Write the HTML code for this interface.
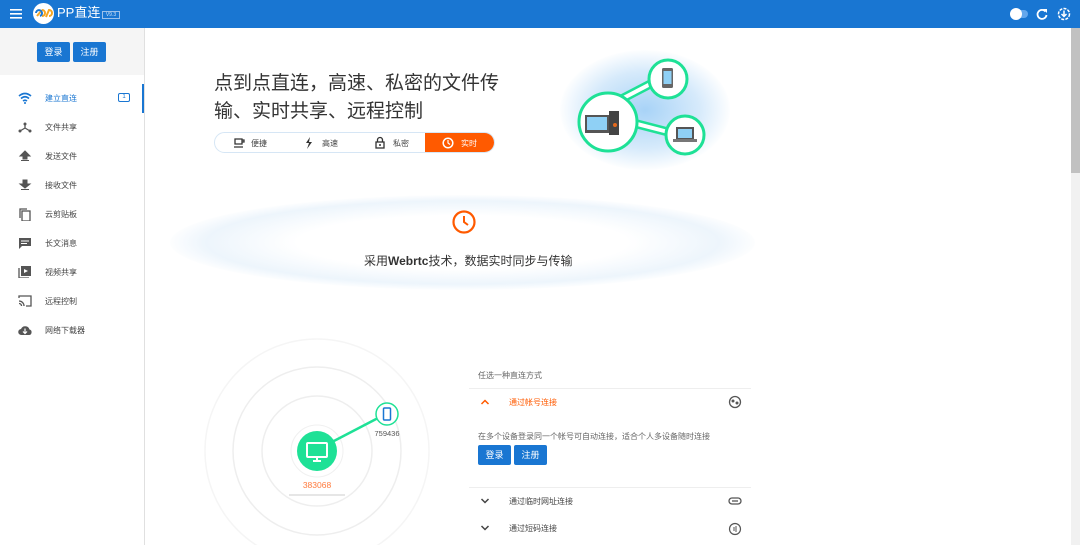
<!DOCTYPE html><html><head><meta charset="utf-8"><style>
*{margin:0;padding:0;box-sizing:border-box}
body{width:1080px;height:545px;overflow:hidden;background:#fff;font-family:"Liberation Sans","Noto Sans CJK SC",sans-serif;position:relative;color:#333}
.hdr{position:absolute;left:0;top:0;width:1080px;height:28px;background:#1976d2}
.side{position:absolute;left:0;top:28px;width:145px;height:517px;border-right:1px solid #e0e0e0;background:#fff}
.stop{height:47px;background:#f5f5f5;position:relative}
.btn{position:absolute;background:#1976d2;color:#fff;font-size:9px;border-radius:2px;text-align:center;line-height:20px;height:20px;width:33px}
.mi{position:absolute;left:0;height:29px;width:145px;font-size:8px;color:#444}
.mi span{position:absolute;left:45px;top:9px}
.mi svg{position:absolute;left:18px;top:8px}
.abs{position:absolute}
</style></head><body>
<div class="hdr">
<svg class="abs" style="left:10px;top:9px" width="12" height="10"><rect y="0" width="12" height="1.6" fill="#fff"/><rect y="4" width="12" height="1.6" fill="#fff"/><rect y="8" width="12" height="1.6" fill="#fff"/></svg>
<div class="abs" style="left:33px;top:3px;width:21px;height:21px;border-radius:50%;background:#fff"></div>
<svg class="abs" style="left:34px;top:7px" width="20" height="13"><path d="M3 9 L8 3 M8 3 A3 3 0 1 1 8 9 M12 10 L15 3 A3 3 0 1 1 15 9" stroke="#f5a623" stroke-width="2" fill="none"/><path d="M2 6 A3 3 0 1 1 6 9" stroke="#1976d2" stroke-width="2" fill="none"/></svg>
<div class="abs" style="left:57px;top:5px;color:#fff;font-size:13px;line-height:16px">PP直连</div>
<div class="abs" style="left:102px;top:11px;width:18px;height:8px;border:1px solid #9cc1ea;color:#cfe1f5;font-size:5px;line-height:6px;text-align:center">V9.3</div>
<div class="abs" style="left:1010px;top:10px;width:18px;height:8px;border-radius:4px;background:#64a7ec"></div>
<div class="abs" style="left:1010px;top:8px;width:12px;height:12px;border-radius:50%;background:#fff"></div>
<svg class="abs" style="left:1036px;top:8px" width="12" height="12"><path d="M9.5 3.5 A4.5 4.5 0 1 0 10.5 7" stroke="#fff" stroke-width="1.8" fill="none"/><path d="M7 1 L11 1 L11 5Z" fill="#fff"/></svg>
<svg class="abs" style="left:1057px;top:7px" width="14" height="14"><circle cx="7" cy="7" r="5.5" stroke="#fff" stroke-width="1.5" fill="none" stroke-dasharray="3 1.2"/><path d="M7 3.5 V9 M4.5 7 L7 9.5 L9.5 7" stroke="#fff" stroke-width="1.5" fill="none"/></svg>
</div>
<div class="side">
<div class="stop"><div class="btn" style="left:37px;top:14px">登录</div><div class="btn" style="left:73px;top:14px">注册</div></div>
<div class="mi" style="top:56px;color:#1976d2"><svg width="14" height="12"><path d="M1 4 Q7 -1 13 4 M3 6.5 Q7 3 11 6.5 M5 9 Q7 7.5 9 9" stroke="#1976d2" stroke-width="1.6" fill="none"/><circle cx="7" cy="11" r="1" fill="#1976d2"/></svg><span>建立直连</span><div class="abs" style="left:118px;top:9px;width:12px;height:9px;border:1px solid #1976d2;border-radius:2px;font-size:6px;text-align:center;line-height:7px">1</div><div class="abs" style="left:142px;top:0;width:2px;height:29px;background:#1976d2"></div></div>
<div class="mi" style="top:85px"><svg width="14" height="12"><circle cx="7" cy="3" r="1.5" fill="#555"/><circle cx="2" cy="10" r="1.5" fill="#555"/><circle cx="12" cy="10" r="1.5" fill="#555"/><path d="M7 3V7L2 10M7 7L12 10" stroke="#555" stroke-width="1.3" fill="none"/></svg><span>文件共享</span></div>
<div class="mi" style="top:114px"><svg width="14" height="12"><path d="M7 1 L2 6 H5 V9 H9 V6 H12Z M3 10.5H11" stroke="#555" fill="#555"/></svg><span>发送文件</span></div>
<div class="mi" style="top:143px"><svg width="14" height="12"><path d="M5 1H9V5H12L7 9 2 5H5Z M3 10.5H11" stroke="#555" fill="#555"/></svg><span>接收文件</span></div>
<div class="mi" style="top:172px"><svg width="14" height="13"><rect x="4" y="3" width="8" height="10" fill="none" stroke="#555" stroke-width="1.3"/><path d="M2 10V1H9" stroke="#555" stroke-width="1.3" fill="none"/></svg><span>云剪贴板</span></div>
<div class="mi" style="top:201px"><svg width="14" height="12"><path d="M1 1H13V9H4L1 12Z" fill="#555"/><path d="M3 4H11M3 6.5H9" stroke="#fff"/></svg><span>长文消息</span></div>
<div class="mi" style="top:230px"><svg width="14" height="12"><rect x="3" y="0" width="10" height="10" fill="#555"/><path d="M1 2V12H11" stroke="#555" stroke-width="1.3" fill="none"/><path d="M6 3L10 5 6 7Z" fill="#fff"/></svg><span>视频共享</span></div>
<div class="mi" style="top:259px"><svg width="14" height="12"><path d="M1 3V1H13V11H8M1 6A5 5 0 0 1 6 11M1 8.5A2.5 2.5 0 0 1 3.5 11" stroke="#555" stroke-width="1.3" fill="none"/></svg><span>远程控制</span></div>
<div class="mi" style="top:288px"><svg width="14" height="12"><path d="M3.5 11A3 3 0 0 1 3 5A4.5 4.5 0 0 1 11.5 5.5A2.8 2.8 0 0 1 11 11Z" fill="#555"/><path d="M7 4.5V9M5 7.5L7 9.5 9 7.5" stroke="#fff" stroke-width="1.2" fill="none"/></svg><span>网络下载器</span></div>
</div>
<div class="abs" style="left:1071px;top:28px;width:9px;height:517px;background:#f1f1f1"></div>
<div class="abs" style="left:1071px;top:28px;width:9px;height:145px;background:#c1c1c1"></div>

<div class="abs" style="left:214px;top:70px;font-size:19px;line-height:28px;color:#333">点到点直连，高速、私密的文件传<br>输、实时共享、远程控制</div>
<div class="abs" style="left:214px;top:132px;width:281px;height:21px;border:1px solid #d6e6f5;border-radius:11px;overflow:hidden;font-size:8px;color:#444">
<svg class="abs" style="left:18px;top:4px" width="12" height="12"><path d="M2 2H9V7H2Z M9 3H11V5H9 M1 10H10" stroke="#333" stroke-width="1.3" fill="none"/></svg><span class="abs" style="left:36px;top:5px">便捷</span>
<svg class="abs" style="left:89px;top:4px" width="10" height="12"><path d="M6 0L2 6H5L3 12 8 5H5Z" fill="#333"/></svg><span class="abs" style="left:107px;top:5px">高速</span>
<svg class="abs" style="left:160px;top:3px" width="10" height="13"><path d="M2.5 6V4A2.5 2.5 0 0 1 7.5 4V6" stroke="#333" stroke-width="1.3" fill="none"/><rect x="1" y="6" width="8" height="6" stroke="#333" stroke-width="1.3" fill="none"/><circle cx="5" cy="9" r="1" fill="#333"/></svg><span class="abs" style="left:178px;top:5px">私密</span>
<div class="abs" style="left:210px;top:0;width:71px;height:21px;background:#ff5a00;color:#fff"><svg class="abs" style="left:17px;top:4px" width="12" height="12"><circle cx="6" cy="6" r="4.8" stroke="#fff" stroke-width="1.5" fill="none"/><path d="M6 3V6L8 7.5" stroke="#fff" stroke-width="1.2" fill="none"/></svg><span class="abs" style="left:36px;top:5px">实时</span></div>
</div>
<div class="abs" style="left:560px;top:50px;width:170px;height:120px;border-radius:50%;background:radial-gradient(ellipse at center,#a8d3f7 0%,#d6eafb 45%,rgba(255,255,255,0) 72%)"></div>
<svg class="abs" style="left:570px;top:55px" width="150" height="110">
<path d="M40 50 L88 25 M40 62 L102 78" stroke="#1ee196" stroke-width="9" fill="none"/><path d="M40 50 L88 25 M40 62 L102 78" stroke="#fff" stroke-width="4" fill="none"/>
<circle cx="38" cy="67" r="29" fill="#fff" stroke="#1ee196" stroke-width="3"/>
<circle cx="98" cy="24" r="19" fill="#fff" stroke="#1ee196" stroke-width="3"/>
<circle cx="115" cy="80" r="19" fill="#fff" stroke="#1ee196" stroke-width="3"/>
<rect x="15" y="60" width="24" height="18" fill="#555"/><rect x="17" y="62" width="20" height="13" fill="#8fd0f5"/><rect x="39" y="56" width="10" height="24" fill="#444"/><circle cx="45" cy="70" r="2" fill="#e56a1e"/>
<rect x="92" y="13" width="11" height="20" rx="1.5" fill="#666"/><rect x="93.5" y="16" width="8" height="13" fill="#8fd0f5"/>
<rect x="106" y="72" width="18" height="12" fill="#555"/><rect x="108" y="74" width="14" height="9" fill="#8fd0f5"/><rect x="103" y="84" width="24" height="3" fill="#777"/>
</svg>

<div class="abs" style="left:170px;top:195px;width:585px;height:95px;border-radius:50%;background:radial-gradient(ellipse at center,#fff 40%,#edf5fc 62%,rgba(255,255,255,0) 72%)"></div>
<svg class="abs" style="left:450px;top:208px" width="28" height="28"><circle cx="14" cy="14" r="10.5" stroke="#ff5a00" stroke-width="2.2" fill="none"/><path d="M14 8V14L18 17" stroke="#ff5a00" stroke-width="2" fill="none"/></svg>
<div class="abs" style="left:364px;top:252px;font-size:12px;color:#333">采用<b style="font-weight:600">Webrtc</b>技术，数据实时同步与传输</div>

<svg class="abs" style="left:200px;top:330px" width="240" height="215">
<circle cx="117" cy="121" r="112" stroke="#f5f5f5" stroke-width="1.5" fill="none"/>
<circle cx="117" cy="121" r="84" stroke="#eeeeee" stroke-width="1.5" fill="none"/>
<circle cx="117" cy="121" r="55" stroke="#eeeeee" stroke-width="1.5" fill="none"/>
<circle cx="117" cy="121" r="26" stroke="#f0f0f0" stroke-width="1" fill="none"/>
<path d="M132 112 L180 87" stroke="#1ee196" stroke-width="2.5"/>
<circle cx="117" cy="121" r="20" fill="#1ee196"/>
<rect x="107" y="113" width="20" height="14" rx="1" stroke="#fff" stroke-width="2" fill="none"/><path d="M113 131H121M117 127V131" stroke="#fff" stroke-width="2"/>
<circle cx="187" cy="84" r="11" fill="#fff" stroke="#1ee196" stroke-width="1.5"/>
<rect x="183.5" y="78" width="7" height="12" rx="1" stroke="#1976d2" stroke-width="1.5" fill="none"/>
<text x="187" y="106" font-size="7.5" fill="#555" text-anchor="middle" font-family="Liberation Sans">759436</text>
<text x="117" y="158" font-size="8.5" fill="#ff7a3c" text-anchor="middle" font-family="Liberation Sans">383068</text>
<path d="M89 165H145" stroke="#ccc"/>
</svg>

<div class="abs" style="left:478px;top:370px;font-size:8px;color:#666">任选一种直连方式</div>
<div class="abs" style="left:469px;top:388px;width:282px;height:1px;background:#eee"></div>
<svg class="abs" style="left:480px;top:398px" width="10" height="8"><path d="M1.5 6L5 2.5 8.5 6" stroke="#ff5a00" stroke-width="1.5" fill="none"/></svg>
<div class="abs" style="left:509px;top:397px;font-size:8px;color:#ff5a00">通过帐号连接</div>
<svg class="abs" style="left:728px;top:395px" width="14" height="14"><circle cx="7" cy="7" r="5.5" stroke="#555" stroke-width="1.3" fill="none"/><circle cx="5" cy="6" r="1.5" fill="#555"/><circle cx="9" cy="8" r="1.5" fill="#555"/></svg>
<div class="abs" style="left:478px;top:431px;font-size:8px;color:#666">在多个设备登录同一个帐号可自动连接，适合个人多设备随时连接</div>
<div class="btn" style="left:478px;top:445px">登录</div><div class="btn" style="left:514px;top:445px">注册</div>
<div class="abs" style="left:469px;top:487px;width:282px;height:1px;background:#eee"></div>
<svg class="abs" style="left:480px;top:497px" width="10" height="8"><path d="M1.5 2L5 5.5 8.5 2" stroke="#444" stroke-width="1.5" fill="none"/></svg>
<div class="abs" style="left:509px;top:496px;font-size:8px;color:#444">通过临时网址连接</div>
<svg class="abs" style="left:728px;top:496px" width="14" height="10"><rect x="1" y="2" width="12" height="6" rx="3" stroke="#555" stroke-width="1.3" fill="none"/><path d="M4 5H10" stroke="#555" stroke-width="1.3"/></svg>
<svg class="abs" style="left:480px;top:524px" width="10" height="8"><path d="M1.5 2L5 5.5 8.5 2" stroke="#444" stroke-width="1.5" fill="none"/></svg>
<div class="abs" style="left:509px;top:523px;font-size:8px;color:#444">通过短码连接</div>
<svg class="abs" style="left:728px;top:522px" width="14" height="14"><circle cx="7" cy="7" r="5.5" stroke="#555" stroke-width="1.2" fill="none"/><path d="M6 5V9M8 4V10" stroke="#555"/></svg>
</body></html>
